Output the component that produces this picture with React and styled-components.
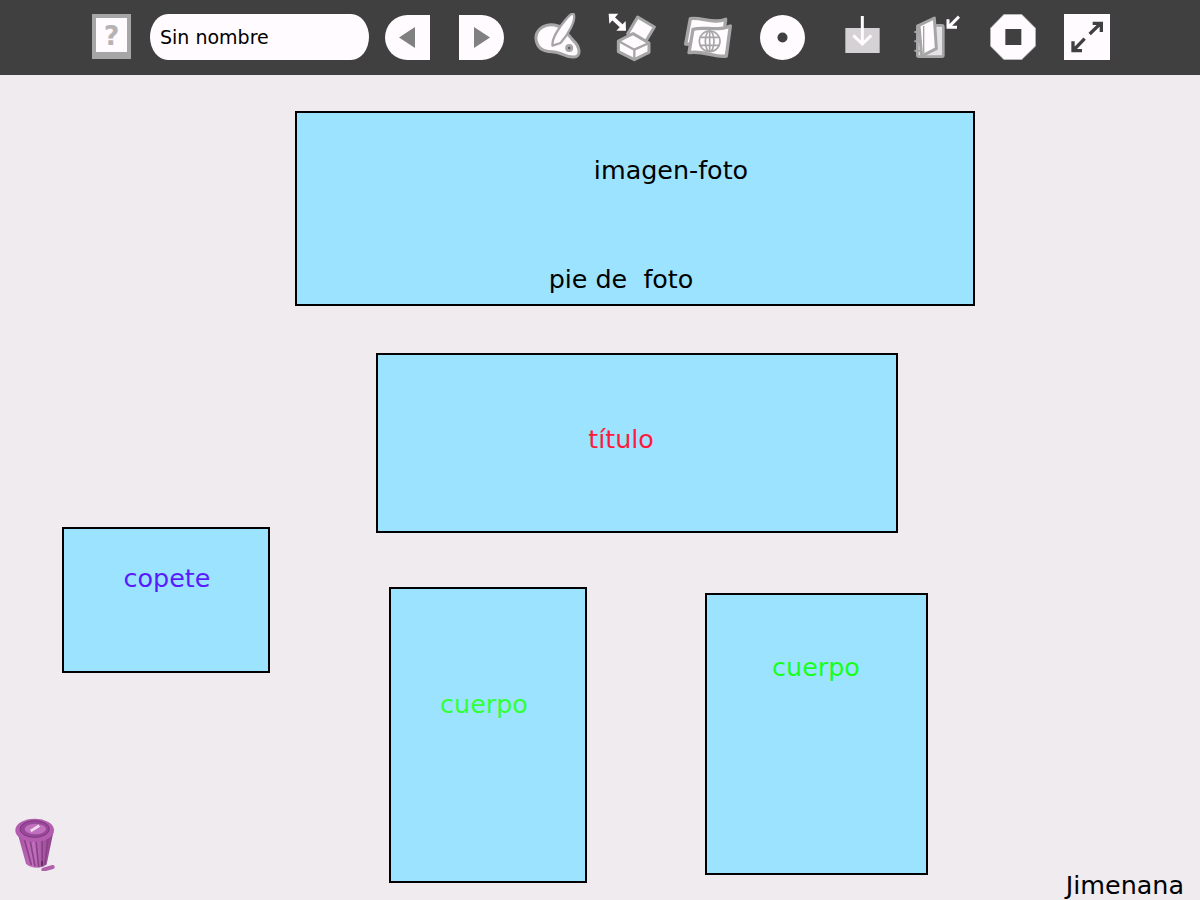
import React from 'react';
import styled, { createGlobalStyle } from 'styled-components';

const GlobalStyle = createGlobalStyle`
  html, body {
    margin: 0;
    padding: 0;
    background: #efebef;
  }
`;

const Screen = styled.div`
  width: 1200px;
  height: 900px;
  display: flex;
  flex-direction: column;
  overflow: hidden;
  font-family: "DejaVu Sans", sans-serif;
`;

const Toolbar = styled.div`
  height: 75px;
  flex: none;
  background: #404040;
  display: flex;
  align-items: flex-start;
  padding-left: 92px;
`;

const ToolIcon = styled.svg`
  display: block;
  flex: none;
  margin-left: ${p => p.$left}px;
  margin-top: ${p => p.$top}px;
`;

const NameEntry = styled.div`
  width: 209px;
  height: 46px;
  margin-left: 19px;
  margin-top: 14px;
  padding-left: 10px;
  border-radius: 18px / 23px;
  background: #fffbff;
  color: #000;
  font-size: 19px;
  line-height: 47px;
`;

const Canvas = styled.div`
  position: relative;
  flex: 1;
  background: #efebef;
`;

const Tile = styled.div`
  position: absolute;
  left: ${p => p.$x}px;
  top: ${p => p.$y - 75}px;
  width: ${p => p.$w}px;
  height: ${p => p.$h}px;
  box-sizing: border-box;
  background: #9ce3ff;
  border: 2px solid #000;
`;

const TileLabel = styled.span`
  position: absolute;
  left: ${p => p.$cx}px;
  top: ${p => p.$cy}px;
  transform: translate(-50%, -50%);
  font-size: 25.4px;
  line-height: 30px;
  white-space: pre;
  color: ${p => p.$color || '#000'};
`;

const Owner = styled.span`
  position: absolute;
  right: 16px;
  bottom: 0;
  font-size: 25.4px;
  line-height: 30px;
  color: #000;
`;

const Trash = styled.svg`
  position: absolute;
  left: 8px;
  top: 740px;
`;

const GREY = '#a6a6a6';
const WHITE = '#fffbff';

const HelpIcon = () => (
  <ToolIcon $left={0} $top={14} width="39" height="45" viewBox="0 0 39 45">
    <rect width="39" height="45" fill={GREY} />
    <rect x="4" y="4" width="31" height="34" fill={WHITE} />
    <text x="19.5" y="31" textAnchor="middle" fontFamily="DejaVu Sans" fontWeight="bold" fontSize="27" fill="#b4b4b4">?</text>
  </ToolIcon>
);

const PrevIcon = () => (
  <ToolIcon $left={16} $top={15} width="45" height="45" viewBox="0 0 45 45">
    <path d="M45 0H22.5a22.5 22.5 0 0 0 0 45H45Z" fill={WHITE} />
    <path d="M14 22.5 30 12v21Z" fill="#808080" />
  </ToolIcon>
);

const NextIcon = () => (
  <ToolIcon $left={29} $top={15} width="45" height="45" viewBox="0 0 45 45">
    <path d="M0 0H22.5a22.5 22.5 0 0 1 0 45H0Z" fill={WHITE} />
    <path d="M31 22.5 15 12v21Z" fill="#808080" />
  </ToolIcon>
);

const PaletteIcon = () => (
  <ToolIcon $left={30} $top={13} width="47" height="46" viewBox="283 40 140 138">
    <path d="M289 122C284 90 314 72 344 76 372 80 382 104 400 122 422 142 424 172 402 172 376 174 366 156 336 156 312 156 293 146 289 122Z" fill={WHITE} stroke={GREY} strokeWidth="9" />
    <path d="M402 44C408 62 388 100 362 130L338 138C336 118 358 84 376 62 386 50 396 38 402 44Z" fill={WHITE} stroke={GREY} strokeWidth="7" strokeLinejoin="round" />
    <circle cx="388" cy="145" r="12" fill={GREY} />
    <circle cx="388" cy="145" r="4" fill="#606060" />
  </ToolIcon>
);

const BoxIcon = () => (
  <ToolIcon $left={26} $top={13} width="49" height="49" viewBox="500 38 147 147">
    <path d="M518 54 544 78" stroke={WHITE} strokeWidth="12" />
    <path d="M505 40H534L507 70ZM557 91H528L556 62Z" fill={WHITE} />
    <path d="M592 50 642 80 612 130 562 100Z" fill={WHITE} stroke={GREY} strokeWidth="9" strokeLinejoin="round" />
    <path d="M534 122 578 100 626 128V156L582 178 534 154Z" fill={WHITE} stroke={GREY} strokeWidth="9" strokeLinejoin="round" />
    <path d="M534 122 582 148 626 128M582 148V178" fill="none" stroke={GREY} strokeWidth="7" />
  </ToolIcon>
);

const GlobeIcon = () => (
  <ToolIcon $left={27} $top={14} width="49" height="45" viewBox="728 42 147 135">
    <path d="M750 56C780 50 820 74 856 58L846 140 736 132Z" fill={WHITE} stroke={GREY} strokeWidth="10" strokeLinejoin="round" />
    <path d="M758 88C790 78 830 96 870 78L858 168C826 174 786 150 746 158Z" fill={WHITE} stroke={GREY} strokeWidth="10" strokeLinejoin="round" />
    <g fill="none" stroke={GREY} strokeWidth="5">
      <circle cx="808" cy="124" r="31" />
      <ellipse cx="808" cy="124" rx="13" ry="31" />
      <path d="M808 93V155M780 112H836M780 136H836" />
    </g>
  </ToolIcon>
);

const DiscIcon = () => (
  <ToolIcon $left={28} $top={15} width="45" height="45" viewBox="0 0 45 45">
    <circle cx="22.5" cy="22.5" r="22.5" fill={WHITE} />
    <circle cx="22.5" cy="22.5" r="5" fill="#404040" />
  </ToolIcon>
);

const DownloadIcon = () => (
  <ToolIcon $left={39} $top={14} width="37" height="39" viewBox="132 42 111 117">
    <rect x="136" y="84" width="103" height="75" fill="#d4d2d4" />
    <path d="M187 48V130M160 106 187 132 214 106" fill="none" stroke={WHITE} strokeWidth="9" />
  </ToolIcon>
);

const BookIcon = () => (
  <ToolIcon $left={33} $top={15} width="46" height="43" viewBox="343 45 138 129">
    <rect x="353" y="76" width="78" height="94" rx="4" fill="#e4e2e4" stroke={GREY} strokeWidth="8" />
    <path d="M358 76 404 54 410 146 366 168Z" fill={WHITE} stroke={GREY} strokeWidth="9" strokeLinejoin="round" />
    <path d="M372 78V160" stroke={GREY} strokeWidth="4" />
    <path d="M344 96H362M344 124H362M344 152H362" stroke={GREY} strokeWidth="6" />
    <path d="M478 50 446 82M445 58V82H472" fill="none" stroke={WHITE} strokeWidth="9" />
  </ToolIcon>
);

const StopIcon = () => (
  <ToolIcon $left={30} $top={14} width="46" height="46" viewBox="568 42 138 138">
    <path d="M610 43H663L705 85V138L663 179H610L569 138V85Z" fill={WHITE} stroke={GREY} strokeWidth="2" />
    <rect x="614" y="87" width="48" height="48" fill="#404040" />
  </ToolIcon>
);

const FullscreenIcon = () => (
  <ToolIcon $left={28} $top={14} width="46" height="46" viewBox="792 42 138 138">
    <rect x="792" y="42" width="138" height="138" fill={WHITE} />
    <path d="M869 102 902 70M878 70H904V96M854 116 821 150M819 124V152H846" fill="none" stroke="#404040" strokeWidth="10" />
  </ToolIcon>
);

const TrashIcon = () => (
  <Trash width="56" height="56" viewBox="20 30 168 168">
    <defs>
      <linearGradient id="can" x1="0" y1="0" x2="1" y2="0">
        <stop offset="0" stopColor="#a850a4" />
        <stop offset="0.45" stopColor="#c070bc" />
        <stop offset="1" stopColor="#8c4088" />
      </linearGradient>
    </defs>
    <path d="M48 82 74 176C88 192 124 192 136 178L156 82Z" fill="url(#can)" />
    <path d="M68 100 90 180M86 104 101 184M104 106 112 186M122 104 123 184M140 100 131 178" stroke="#8c4088" strokeWidth="5" fill="none" />
    <ellipse cx="100" cy="76" rx="58" ry="35" fill="#b45cb0" />
    <ellipse cx="100" cy="72" rx="44" ry="25" fill="#98489a" stroke="#7c387c" strokeWidth="3" />
    <ellipse cx="102" cy="72" rx="32" ry="16" fill="#c070bc" />
    <path d="M88 78 114 62" stroke="#f0d8f0" strokeWidth="8" />
    <path d="M126 194 154 186" stroke="#b060ac" strokeWidth="12" strokeLinecap="round" />
    <path d="M122 168V182" stroke="#302030" strokeWidth="3" />
  </Trash>
);

const App = () => (
  <Screen>
    <GlobalStyle />
    <Toolbar>
      <HelpIcon />
      <NameEntry>Sin nombre</NameEntry>
      <PrevIcon />
      <NextIcon />
      <PaletteIcon />
      <BoxIcon />
      <GlobeIcon />
      <DiscIcon />
      <DownloadIcon />
      <BookIcon />
      <StopIcon />
      <FullscreenIcon />
    </Toolbar>
    <Canvas>
      <Tile $x={295} $y={111} $w={680} $h={195}>
        <TileLabel $cx={374} $cy={57}>imagen-foto</TileLabel>
        <TileLabel $cx={324} $cy={166}>pie de  foto</TileLabel>
      </Tile>
      <Tile $x={376} $y={353} $w={522} $h={180}>
        <TileLabel $cx={243} $cy={84} $color="#ff1a3c">título</TileLabel>
      </Tile>
      <Tile $x={62} $y={527} $w={208} $h={146}>
        <TileLabel $cx={103} $cy={49} $color="#5a1aff">copete</TileLabel>
      </Tile>
      <Tile $x={389} $y={587} $w={198} $h={296}>
        <TileLabel $cx={93} $cy={115} $color="#33ff33">cuerpo</TileLabel>
      </Tile>
      <Tile $x={705} $y={593} $w={223} $h={282}>
        <TileLabel $cx={109} $cy={72} $color="#19ff19">cuerpo</TileLabel>
      </Tile>
      <TrashIcon />
      <Owner>Jimenana</Owner>
    </Canvas>
  </Screen>
);

export default App;
